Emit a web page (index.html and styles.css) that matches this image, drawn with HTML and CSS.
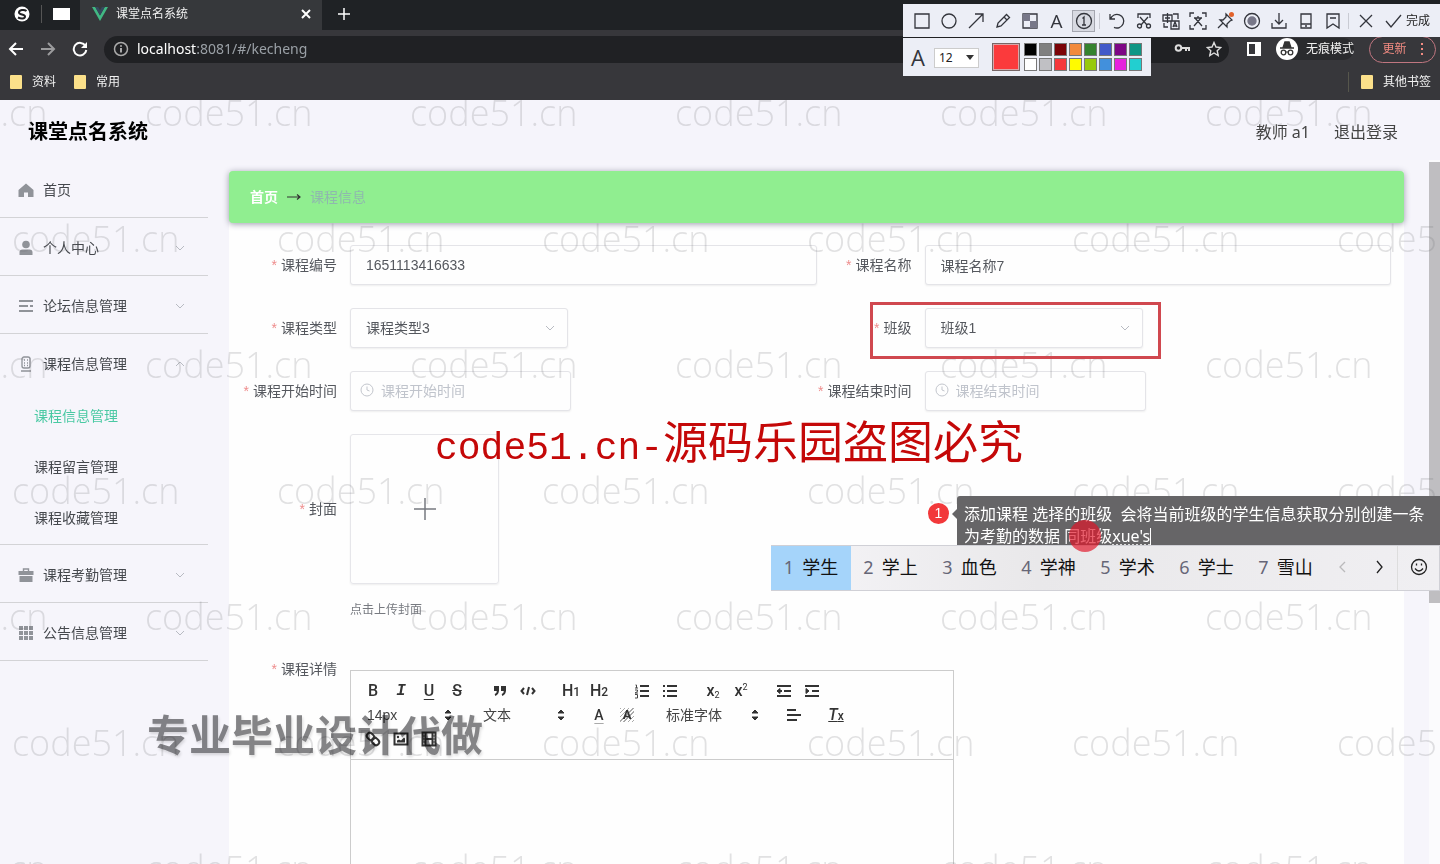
FILE: index.html
```html
<!DOCTYPE html>
<html lang="zh-CN">
<head>
<meta charset="utf-8">
<title>课堂点名系统</title>
<link rel="stylesheet" href="styles.css">
</head>
<body>
<div class="browser">
  <div class="tabstrip">
    <div class="pinned">
      <svg class="i16" viewBox="0 0 16 16"><circle cx="8" cy="8" r="7.500" fill="#fff"/><path d="M12.500 5C10 3 5 4 5 6.500S11 8 11 10.500 7 13 4 11.500" fill="none" stroke="#202124" stroke-width="2"/></svg>
      <span class="pin-line"></span>
      <span class="pin-page"></span>
    </div>
    <div class="tab">
      <svg class="i16" viewBox="0 0 16 16"><path d="M0 1h3.200L8 9.500 12.800 1H16L8 15z" fill="#41b883"/><path d="M3.200 1h2.900L8 4.300 9.900 1h2.900L8 9.500z" fill="#35495e"/></svg>
      <span class="tab-title">课堂点名系统</span>
      <button class="ghost" aria-label="关闭标签页"><svg class="i12" viewBox="0 0 12 12"><path d="M2 2l8 8M10 2l-8 8" class="w2"/></svg></button>
    </div>
    <button class="ghost new-tab" aria-label="新标签页"><svg class="i14" viewBox="0 0 14 14"><path d="M7 1v12M1 7h12" class="w1"/></svg></button>
  </div>
  <div class="addressrow">
    <button class="ghost" aria-label="后退"><svg class="i16" viewBox="0 0 16 16"><path d="M15 8H2M8 2L2 8l6 6" class="w2"/></svg></button>
    <button class="ghost dim" aria-label="前进"><svg class="i16" viewBox="0 0 16 16"><path d="M1 8h13M8 2l6 6-6 6" class="w2"/></svg></button>
    <button class="ghost" aria-label="刷新"><svg class="i16" viewBox="0 0 16 16"><path d="M13.500 5A6.300 6.300 0 1 0 14.300 9" class="w2"/><path d="M15 1v6H9z" fill="#fff"/></svg></button>
    <div class="omnibox">
      <svg class="i16" viewBox="0 0 16 16"><circle cx="8" cy="8" r="6.500" fill="none" stroke="#aaa" stroke-width="1.500"/><path d="M8 7v4.500M8 4.200v1.600" stroke="#ccc" stroke-width="1.600"/></svg>
      <span class="url"><b>localhost</b>:8081/#/kecheng</span>
      <svg class="i16 push" viewBox="0 0 16 16"><circle cx="4.500" cy="7" r="2.800" fill="none" stroke="#ddd" stroke-width="2"/><path d="M7 7h8v3M12 7v3" fill="none" stroke="#ddd" stroke-width="2"/></svg>
      <svg class="i16" viewBox="0 0 16 16"><path d="M8 1.500l2 4.500 4.800.5-3.600 3.200 1 4.800L8 12l-4.200 2.500 1-4.800L1.200 6.500 6 6z" fill="none" stroke="#ddd" stroke-width="1.400"/></svg>
    </div>
    <svg class="i14 panel-ic" viewBox="0 0 14 14"><path d="M1 1h12v12H1z" fill="none" stroke="#fff" stroke-width="2"/><path d="M8 1h5v12H8z" fill="#fff"/></svg>
    <div class="incognito">
      <svg class="i22" viewBox="0 0 22 22"><circle cx="11" cy="11" r="11" fill="#fff"/><path d="M4 10h14M7.500 8.500L9 4h4l1.500 4.500z" fill="#333" stroke="#333" stroke-width="1.500"/><circle cx="7.500" cy="14.500" r="2.300" fill="none" stroke="#333" stroke-width="1.300"/><circle cx="14.500" cy="14.500" r="2.300" fill="none" stroke="#333" stroke-width="1.300"/><path d="M9.500 14h3" stroke="#333"/></svg>
      <span>无痕模式</span>
    </div>
    <button class="update">更新<span class="dots"><i></i><i></i><i></i></span></button>
  </div>
  <div class="bookmarks">
    <a class="bm" href="#a"><i class="folder"></i>资料</a>
    <a class="bm" href="#b"><i class="folder"></i>常用</a>
    <a class="bm other" href="#c"><i class="folder"></i>其他书签</a>
  </div>
</div>

<div class="page">
  <header class="top">
    <h1>课堂点名系统</h1>
    <div class="user"><span>教师 a1</span><a href="#out">退出登录</a></div>
  </header>
  <div class="body">
    <nav class="side">
      <a class="item" href="#1"><svg class="i16" viewBox="0 0 16 16"><path d="M8 1.500L15.500 8v7H10v-4.500H6V15H.5V8z" fill="#909399"/></svg>首页</a>
      <a class="item" href="#2"><svg class="i16" viewBox="0 0 16 16"><circle cx="8" cy="4.500" r="3.800" fill="#909399"/><path d="M1.500 15v-2.500q0-3 3-3h7q3 0 3 3V15z" fill="#909399"/></svg>个人中心<svg class="chev" viewBox="0 0 10 10"><path d="M1 3l4 4 4-4"/></svg></a>
      <a class="item" href="#3"><svg class="i16" viewBox="0 0 16 16"><path d="M1 3h14M1 8h9M12 8h3M1 13h14" stroke="#909399" stroke-width="2"/></svg>论坛信息管理<svg class="chev" viewBox="0 0 10 10"><path d="M1 3l4 4 4-4"/></svg></a>
      <a class="item open" href="#4"><svg class="i16" viewBox="0 0 16 16"><rect x="4" y="1" width="8" height="11" rx="2" fill="none" stroke="#909399" stroke-width="1.300"/><path d="M3 15h10M6 4h1M9 4h1M6 7h1M9 7h1M6 9.500h1M9 9.500h1" stroke="#909399" stroke-width="1.300"/></svg>课程信息管理<svg class="chev" viewBox="0 0 10 10"><path d="M1 7l4-4 4 4"/></svg></a>
      <div class="sub">
        <a class="active" href="#5">课程信息管理</a>
        <a href="#6">课程留言管理</a>
        <a href="#7">课程收藏管理</a>
      </div>
      <a class="item" href="#8"><svg class="i16" viewBox="0 0 16 16"><path d="M5.500 4V2h5v2" fill="none" stroke="#909399" stroke-width="1.400"/><path d="M.5 4h15v4H.5zM1.500 9h13v6h-13z" fill="#909399"/></svg>课程考勤管理<svg class="chev" viewBox="0 0 10 10"><path d="M1 3l4 4 4-4"/></svg></a>
      <a class="item" href="#9"><svg class="i16" viewBox="0 0 16 16"><path d="M1 1h4v4H1zM6 1h4v4H6zM11 1h4v4h-4zM1 6h4v4H1zM6 6h4v4H6zM11 6h4v4h-4zM1 11h4v4H1zM6 11h4v4H6zM11 11h4v4h-4z" fill="#909399"/></svg>公告信息管理<svg class="chev" viewBox="0 0 10 10"><path d="M1 3l4 4 4-4"/></svg></a>
    </nav>
    <main class="main">
      <div class="crumb"><b>首页</b><svg class="i14" viewBox="0 0 14 14"><path d="M0 7h13M10 4.500L13 7l-3 2.500" fill="none" stroke="#333" stroke-width="1.200"/></svg><span>课程信息</span></div>
      <form class="form">
        <label class="req" for="no">课程编号</label>
        <div><input class="box" id="no" value="1651113416633"></div>
        <label class="req" for="nm">课程名称</label>
        <div><input class="box" id="nm" value="课程名称7"></div>

        <label class="req" for="ty">课程类型</label>
        <div><div class="pick"><select class="box" id="ty"><option>课程类型3</option></select><svg class="chev" viewBox="0 0 10 10"><path d="M1 3l4 4 4-4"/></svg></div></div>
        <label class="req" for="cl">班级</label>
        <div><div class="pick"><select class="box" id="cl"><option>班级1</option></select><svg class="chev" viewBox="0 0 10 10"><path d="M1 3l4 4 4-4"/></svg></div></div>

        <label class="req" for="st">课程开始时间</label>
        <div><div class="date"><input class="box" id="st" placeholder="课程开始时间"><svg class="clock" viewBox="0 0 14 14"><circle cx="7" cy="7" r="6"/><path d="M7 3.500V7l2.500 1"/></svg></div></div>
        <label class="req" for="en">课程结束时间</label>
        <div><div class="date"><input class="box" id="en" placeholder="课程结束时间"><svg class="clock" viewBox="0 0 14 14"><circle cx="7" cy="7" r="6"/><path d="M7 3.500V7l2.500 1"/></svg></div></div>

        <span class="req cover-label">封面</span>
        <div class="wide">
          <button type="button" class="upload" aria-label="上传封面"><svg viewBox="0 0 24 24"><path d="M12 1v22M1 12h22" fill="none" stroke="#777a80" stroke-width="1.500"/></svg></button>
          <p class="hint">点击上传封面</p>
        </div>

        <span class="req detail-label">课程详情</span>
        <div class="wide detail">
          <div class="editor">
            <div class="tools">
              <div class="trow">
                <div class="tg"><button type="button" class="tb bold">B</button><button type="button" class="tb ital">I</button><button type="button" class="tb und">U</button><button type="button" class="tb strike">S</button></div>
                <div class="tg"><button type="button" class="tb" aria-label="引用"><svg viewBox="0 0 18 18"><path d="M4 5h3v3H4zM11 5h3v3h-3z" class="f s"/><path d="M7 8c0 4-3 5-3 5M14 8c0 4-3 5-3 5" class="s"/></svg></button><button type="button" class="tb" aria-label="代码"><svg viewBox="0 0 18 18"><path d="M5 6L2.500 9 5 12M13 6l2.500 3L13 12M10 5L8 13" class="s"/></svg></button></div>
                <div class="tg"><button type="button" class="tb">H<small>1</small></button><button type="button" class="tb">H<small>2</small></button></div>
                <div class="tg"><button type="button" class="tb" aria-label="有序列表"><svg viewBox="0 0 18 18"><path d="M7 4h9M7 9h9M7 14h9" class="s"/><path d="M2.500 3h1v3M2 6h3M2 8h2.500v1.500L2 11h3M2 12.500h2.500V16H2" fill="none" stroke="#444"/></svg></button><button type="button" class="tb" aria-label="无序列表"><svg viewBox="0 0 18 18"><path d="M6 4h10M6 9h10M6 14h10M2 4h2M2 9h2M2 14h2" class="s"/></svg></button></div>
                <div class="tg"><button type="button" class="tb">x<sub>2</sub></button><button type="button" class="tb">x<sup>2</sup></button></div>
                <div class="tg"><button type="button" class="tb" aria-label="减少缩进"><svg viewBox="0 0 18 18"><path d="M2 4h14M2 14h14M9 9h7M2 9h5" class="s"/><path d="M5 6.500v5L2 9z" class="f s1"/></svg></button><button type="button" class="tb" aria-label="增加缩进"><svg viewBox="0 0 18 18"><path d="M2 4h14M2 14h14M9 9h7" class="s"/><path d="M3 6.500v5L6 9z" class="f s1"/></svg></button></div>
              </div>
              <div class="trow">
                <button type="button" class="qp">14px<svg viewBox="0 0 18 18"><path d="M6 7l3-3 3 3zM6 11l3 3 3-3z" class="f s1"/></svg></button>
                <button type="button" class="qp head">文本<svg viewBox="0 0 18 18"><path d="M6 7l3-3 3 3zM6 11l3 3 3-3z" class="f s1"/></svg></button>
                <div class="tg"><button type="button" class="tb color">A</button><button type="button" class="tb fill"><span>A</span></button></div>
                <button type="button" class="qp font">标准字体<svg viewBox="0 0 18 18"><path d="M6 7l3-3 3 3zM6 11l3 3 3-3z" class="f s1"/></svg></button>
                <button type="button" class="tb" aria-label="对齐"><svg viewBox="0 0 18 18"><path d="M3 4h9M3 9h14M3 14h10" class="s"/></svg></button>
                <button type="button" class="tb clean"><i>T</i><small>x</small></button>
              </div>
              <div class="trow">
                <div class="tg"><button type="button" class="tb" aria-label="链接"><svg viewBox="0 0 18 18"><g class="s" transform="rotate(45 9 9)"><rect x="1.500" y="6" width="8" height="6" rx="3"/><rect x="8.500" y="6" width="8" height="6" rx="3"/></g></svg></button><button type="button" class="tb" aria-label="图片"><svg viewBox="0 0 18 18"><path d="M2.500 3.500h13v11h-13z" class="s"/><circle cx="6" cy="7" r="1.200" class="f"/><path d="M5 12.500v-2l2-1 2 1 3-3 1 1v4z" class="f"/></svg></button><button type="button" class="tb" aria-label="视频"><svg viewBox="0 0 18 18"><path d="M2.500 2.500h13v13h-13zM5.500 3v12M12.500 3v12M5 9h8" class="s"/><path d="M3 6h2M3 9h2M3 12h2M13 6h2M13 9h2M13 12h2" class="s1"/></svg></button></div>
              </div>
            </div>
            <div class="canvas" contenteditable="true" role="textbox" aria-label="课程详情"></div>
          </div>
        </div>
      </form>
    </main>
    <div class="rail"><div class="thumb"></div></div>
  </div>
  <div class="marks" aria-hidden="true">
    <div class="mrow"><span>code51.cn</span><span>code51.cn</span><span>code51.cn</span><span>code51.cn</span><span>code51.cn</span><span>code51.cn</span></div>
    <div class="mrow odd"><span>code51.cn</span><span>code51.cn</span><span>code51.cn</span><span>code51.cn</span><span>code51.cn</span><span>code51.cn</span></div>
    <div class="mrow"><span>code51.cn</span><span>code51.cn</span><span>code51.cn</span><span>code51.cn</span><span>code51.cn</span><span>code51.cn</span></div>
    <div class="mrow odd"><span>code51.cn</span><span>code51.cn</span><span>code51.cn</span><span>code51.cn</span><span>code51.cn</span><span>code51.cn</span></div>
    <div class="mrow"><span>code51.cn</span><span>code51.cn</span><span>code51.cn</span><span>code51.cn</span><span>code51.cn</span><span>code51.cn</span></div>
    <div class="mrow odd"><span>code51.cn</span><span>code51.cn</span><span>code51.cn</span><span>code51.cn</span><span>code51.cn</span><span>code51.cn</span></div>
    <div class="mrow"><span>code51.cn</span><span>code51.cn</span><span>code51.cn</span><span>code51.cn</span><span>code51.cn</span><span>code51.cn</span></div>
  </div>
</div>

<div class="frame"></div>
<div class="notice"><span>code51.cn-</span>源码乐园盗图必究</div>
<div class="ad">专业毕业设计代做</div>

<div class="badge">1</div>
<div class="note">添加课程 选择的班级  会将当前班级的学生信息获取分别创建一条
为考勤的数据 同班级<u>xue's</u><span class="caret"></span></div>

<div class="ime">
  <button class="cand on"><span>1</span>学生</button>
  <button class="cand"><span>2</span>学上</button>
  <button class="cand"><span>3</span>血色</button>
  <button class="cand"><span>4</span>学神</button>
  <button class="cand"><span>5</span>学术</button>
  <button class="cand"><span>6</span>学士</button>
  <button class="cand"><span>7</span>雪山</button>
  <button class="nav off" aria-label="上一页"><svg class="i14" viewBox="0 0 14 14"><path d="M9 2L4 7l5 5" class="k"/></svg></button>
  <button class="nav" aria-label="下一页"><svg class="i14" viewBox="0 0 14 14"><path d="M5 1l5 6-5 6" class="k"/></svg></button>
  <button class="nav face" aria-label="表情"><svg class="i18" viewBox="0 0 18 18"><circle cx="9" cy="9" r="7.500" class="k"/><path d="M5 10.500q4 5 8 0M6.500 5.500v2M11.500 5.500v2" class="k"/></svg></button>
</div>
<div class="cursor"></div>

<div class="snip">
  <button aria-label="矩形"><svg viewBox="0 0 18 18"><path d="M2 2h14v14H2z"/></svg></button>
  <button aria-label="椭圆"><svg viewBox="0 0 18 18"><circle cx="9" cy="9" r="7"/></svg></button>
  <button aria-label="箭头"><svg viewBox="0 0 18 18"><path d="M2 16L16 2M8 2h8v8"/></svg></button>
  <button aria-label="画笔"><svg viewBox="0 0 18 18"><path d="M3 15l1-4 8.500-8.500 3 3L7 14zM10 5l3 3"/></svg></button>
  <button aria-label="马赛克"><svg viewBox="0 0 18 18"><path d="M2 2h14v14H2z"/><path d="M9 9h7v7H9zM2 2h7v7H2z" fill="#778" stroke="none"/></svg></button>
  <button class="letter">A</button>
  <button class="sel" aria-label="序号"><svg viewBox="0 0 18 18"><circle cx="9" cy="9" r="7.500"/><path d="M7.500 6.500L9 5v8M7 13h4"/></svg></button>
  <i class="sep"></i>
  <button aria-label="撤销"><svg viewBox="0 0 18 18"><path d="M2 2v5h5M2.500 7A6.800 6.800 0 1 1 6 15.300"/></svg></button>
  <button aria-label="裁剪"><svg viewBox="0 0 18 18"><path d="M3 6V2h12v4M5 5l7 8M13 5l-7 8"/><circle cx="4.500" cy="14" r="2"/><circle cx="13.500" cy="14" r="2"/></svg></button>
  <button aria-label="翻译"><svg viewBox="0 0 18 18"><path d="M1 3h9v6H1zM3 6h5M5.500 1v10M11 2h5v5M2 11v4h4M9 9h8v8H9zM11 15l2-5 2 5M11.500 14h3"/></svg></button>
  <button aria-label="识别文字"><svg viewBox="0 0 18 18"><path d="M1 5V1h4M13 1h4v4M17 13v4h-4M5 17H1v-4M5 6h8M9 4v2M12 6L5 14M6 6l7 8"/></svg></button>
  <button class="pin" aria-label="钉住"><svg viewBox="0 0 18 18"><path d="M10 2l6 6-2 1-3 3v3L4 8h3l3-3zM7 11l-5 5"/><circle cx="15.500" cy="2.500" r="2.500" fill="#e2622b" stroke="none"/></svg></button>
  <button aria-label="录制"><svg viewBox="0 0 18 18"><circle cx="9" cy="9" r="7.500"/><circle cx="9" cy="9" r="4" fill="#778" stroke="#778"/></svg></button>
  <button aria-label="保存"><svg viewBox="0 0 18 18"><path d="M9 1v11M5 8l4 4 4-4M2 11v5h14v-5"/></svg></button>
  <button aria-label="手机"><svg viewBox="0 0 18 18"><path d="M4 2h10v14H4zM4 12h10M8 14h2"/></svg></button>
  <button aria-label="收藏"><svg viewBox="0 0 18 18"><path d="M3 2h12v14l-6-4-6 4zM6 6h6"/></svg></button>
  <i class="sep"></i>
  <button aria-label="取消"><svg viewBox="0 0 18 18"><path d="M3 3l12 12M15 3L3 15"/></svg></button>
  <button class="done"><svg viewBox="0 0 18 18"><path d="M2 9l5 6L17 3"/></svg>完成</button>
</div>
<div class="palette">
  <span class="letter">A</span>
  <div class="size"><select aria-label="字号"><option>12</option></select><i></i></div>
  <span class="current"></span>
  <div class="colors"><i class="c1"></i><i class="c2"></i><i class="c3"></i><i class="c4"></i><i class="c5"></i><i class="c6"></i><i class="c7"></i><i class="c8"></i><i class="c9"></i><i class="c10"></i><i class="c11"></i><i class="c12"></i><i class="c13"></i><i class="c14"></i><i class="c15"></i><i class="c16"></i></div>
</div>
</body>
</html>
```
FILE: styles.css
```css
* { box-sizing: border-box; }
body {
  margin: 0;
  height: 100vh;
  display: flex;
  flex-direction: column;
  overflow: hidden;
  position: relative;
  font: 14px/20px "Liberation Sans", "Noto Sans CJK SC", sans-serif;
  color: #55585e;
}
button, input, select { font: inherit; color: inherit; }
button { border: 0; background: none; padding: 0; display: flex; align-items: center; justify-content: center; }
a { color: inherit; text-decoration: none; }
svg { flex: none; display: block; }
.i12 { width: 12px; height: 12px; }
.i14 { width: 14px; height: 14px; }
.i16 { width: 16px; height: 16px; }
.i18 { width: 18px; height: 18px; }
.i22 { width: 22px; height: 22px; }
.w1, .w2 { fill: none; stroke: #fff; stroke-width: 1.5; }
.w2 { stroke-width: 2; }

/* browser window */
.browser { flex: none; background: #37373b; color: #f1f1f1; }
.tabstrip { height: 30px; background: #1f2225; display: flex; align-items: stretch; }
.pinned { width: 80px; display: flex; align-items: center; padding: 0 10px 3px 14px; justify-content: space-between; }
.pin-line { width: 1px; height: 18px; background: #555; }
.pin-page { width: 17px; height: 12px; background: #fff; }
.tab { width: 242px; background: #36383b; display: flex; align-items: center; gap: 8px; padding: 0 10px 3px 12px; }
.tab-title { flex: 1; font-size: 12px; }
.new-tab { width: 44px; padding-bottom: 3px; }
.addressrow { height: 38px; display: flex; align-items: center; padding: 0 4px 0 8px; }
.addressrow .ghost { margin-right: 16px; }
.addressrow .dim { opacity: .5; }
.omnibox { flex: 1; height: 27px; border-radius: 14px; background: #202124; display: flex; align-items: center; gap: 8px; padding: 0 7px 0 9px; }
.push { margin-left: auto; margin-right: 8px; }
.url { font: 14px/20px "Noto Sans", sans-serif; color: #9aa0a6; }
.url b { font-weight: 400; color: #fff; }
.panel-ic { margin: 0 15px 0 18px; }
.incognito { display: flex; align-items: center; gap: 8px; font-size: 12px; background: #2a2b2e; border-radius: 14px; }
.update { margin-left: 15px; width: 67px; height: 27px; border: 1px solid #c07680; border-radius: 14px; color: #f28b82; font-size: 12px; gap: 14px; }
.dots { display: flex; flex-direction: column; gap: 3px; }
.dots i { width: 2px; height: 2px; background: #f28b82; }
.bookmarks { height: 32px; display: flex; align-items: center; gap: 18px; padding: 0 9px 4px 10px; font-size: 12px; }
.bm { display: flex; align-items: center; gap: 10px; }
.folder { width: 12px; height: 14px; background: #fbe08a; border-radius: 1px; }
.other { margin-left: auto; padding-left: 12px; border-left: 1px solid #56564c; }

/* application */
.page { flex: 1; min-height: 0; position: relative; overflow: hidden; background: #f6f5fb; display: flex; flex-direction: column; }
.top { height: 60px; flex: none; display: flex; align-items: center; justify-content: space-between; padding: 4px 42px 0 28px; background: #f5f4fb; }
h1 { margin: 0; font-size: 20px; line-height: 28px; color: #000; }
.user { display: flex; gap: 24px; font: 16px/24px "Noto Sans", "Noto Sans CJK SC", sans-serif; color: #444; }
.body { flex: 1; min-height: 0; display: flex; }
.side { width: 208px; flex: none; color: #45484d; }
.item { height: 58px; border-bottom: 1px solid #d3d3d6; display: flex; align-items: center; gap: 9px; padding: 2px 23px 0 18px; }
.item .chev { margin-left: auto; }
.open { border-bottom: 0; }
.chev { width: 10px; height: 10px; fill: none; stroke: #b8bbc2; }
.sub { border-bottom: 1px solid #d3d3d6; padding-left: 34px; display: flex; flex-direction: column; margin-top: -1px; }
.sub a { line-height: 51px; }
.sub .active { color: #4ac9a3; }
.main { flex: 1; min-width: 0; margin: 11px 25px 0 21px; background: #fefefe; display: flex; flex-direction: column; }
.crumb { flex: none; height: 52px; border-radius: 4px; background: #90ee90; box-shadow: 0 1px 6px #99a; display: flex; align-items: center; gap: 9px; padding: 0 21px; }
.crumb b { color: #fff; }
.crumb span { color: #8fb8ae; }
.form { display: grid; grid-template-columns: 121px 1fr 108px 1fr; row-gap: 23px; padding: 22px 13px 0 0; }
.form > label, .form > span { line-height: 40px; text-align: right; padding-right: 13px; white-space: nowrap; }
.req::before { content: "*"; color: #ee8c8c; margin-right: 4px; }
.box { display: block; width: 100%; height: 40px; border: 1px solid #e4e4e8; border-radius: 3px; background: #fefefe; padding: 0 15px; appearance: none; outline: 0; box-shadow: 0 1px 2px #eee; }
.pick { position: relative; width: 218px; }
.pick .chev { position: absolute; right: 13px; top: 15px; }
.date { position: relative; width: 221px; }
.date .box { padding-left: 30px; }
.date .box::placeholder { color: #c0c4cc; }
.clock { position: absolute; left: 10px; top: 12px; width: 14px; height: 14px; fill: none; stroke: #c3c6cd; }
.wide { grid-column: 2 / 5; }
.form > .cover-label { padding-top: 55px; }
.upload { width: 149px; height: 150px; border: 1px solid #e6e6ea; border-radius: 3px; box-shadow: 0 1px 2px #eee; }
.upload svg { width: 24px; height: 24px; }
.hint { margin: 16px 0 0; font-size: 12px; color: #777a80; }
.form > .detail-label { padding-top: 6px; }
.detail { padding-top: 27px; }
.editor { width: 604px; border: 1px solid #ccc; }
.tools { padding: 8px; border-bottom: 1px solid #ccc; color: #444; }
.trow { display: flex; height: 24px; gap: 15px; }
.tg { display: flex; }
.tb { width: 28px; height: 24px; font: 500 16px/24px Roboto, sans-serif; color: #333; }
.tb svg, .qp svg { width: 18px; height: 18px; }
.tb small { font-size: 12px; padding-top: 2px; }
.tb sub, .tb sup { font-size: 9px; line-height: 9px; font-weight: 400; }
.tb sub { padding-top: 8px; }
.tb sup { padding-bottom: 8px; }
.ital { font: italic bold 16px/24px "Liberation Mono", monospace; }
.und { text-decoration: underline; text-underline-offset: 3px; }
.strike { text-decoration: line-through; }
.color { text-decoration: underline; text-decoration-color: #aaa; text-underline-offset: 3px; font-size: 14px; }
.fill span { font-size: 13px; font-weight: 700; line-height: 14px; padding: 0 3px; background: repeating-linear-gradient(135deg, #aaa 0 1px, #fff 1px 3px); }
.clean { text-decoration: underline; }
.s { fill: none; stroke: #333; stroke-width: 2; }
.s1 { fill: none; stroke: #333; stroke-width: 1; }
.f { fill: #333; }
.qp { width: 98px; justify-content: space-between; padding-left: 8px; }
.qp.head { padding-left: 11px; }
.qp.font { width: 108px; padding-left: 10px; }
.canvas { height: 240px; outline: 0; }
.rail { width: 11px; flex: none; padding-top: 2px; background: #fbfbfd; }
.thumb { height: 441px; background: #bfbec1; }

/* repeating page mark */
.marks { position: absolute; left: 0; right: 0; top: -5px; overflow: hidden; pointer-events: none; }
.mrow { display: flex; height: 126px; margin-left: -120px; font: 300 36px/36px "Open Sans", "Noto Sans", sans-serif; color: rgba(110, 108, 115, .2); }
.mrow.odd { margin-left: 12px; }
.mrow span { flex: none; width: 265px; }

/* annotations over the page */
.frame { position: absolute; left: 870px; top: 302px; width: 291px; height: 57px; border: 3px solid #d0484f; }
.notice { position: absolute; left: 435px; top: 410px; font: 45px/60px "Noto Sans CJK SC", sans-serif; color: #c40808; white-space: nowrap; }
.notice span { font: 38px/60px "Liberation Mono", monospace; }
.ad { position: absolute; left: 147px; top: 708px; font: 700 42px/50px "Noto Sans CJK SC", sans-serif; color: #858587; text-shadow: 1px 2px 3px #ddd; white-space: nowrap; mix-blend-mode: multiply; }
.badge { position: absolute; left: 928px; top: 503px; width: 21px; height: 21px; border-radius: 50%; background: #f2383a; color: #fff; text-align: center; line-height: 21px; }
.note { position: absolute; left: 957px; right: 0; top: 496px; height: 50px; padding: 7px 7px 0; font: 16px/22px "Noto Sans", "Noto Sans CJK SC", sans-serif; color: #fff; background: #666567; white-space: pre; border-radius: 3px 0 0 0; }
.note::before { content: ""; position: absolute; left: -5px; top: 13px; border: 5px solid transparent; border-left: 0; border-right-color: #666567; }
.note u { text-decoration-style: dotted; text-underline-offset: 3px; }
.caret { display: inline-block; width: 1px; height: 18px; background: #fff; vertical-align: -4px; }
.cursor { position: absolute; left: 1069px; top: 520px; width: 32px; height: 32px; border-radius: 50%; background: rgba(226, 20, 40, .68); }
.ime { position: absolute; left: 771px; right: 0; top: 545px; height: 46px; display: flex; background: linear-gradient(90deg, #f6f5f8, #e9e8ea 40%, #f0eff2); border: 1px solid #d0d0d6; border-left: 0; font: 18px/24px "Noto Sans", "Noto Sans CJK SC", sans-serif; color: #111; }
.ime button { padding-bottom: 2px; }
.cand { flex: 0 0 80px; gap: 8px; }
.cand + .cand { flex-basis: 79px; }
.cand span { color: #667; }
.cand.on { background: #a5d4fa; }
.nav { flex: 0 0 36px; }
.off { opacity: .25; }
.face { flex: 1; border-left: 1px solid #ddd; }
.k { fill: none; stroke: #222; stroke-width: 1.3; }

/* capture toolbar */
.snip { position: absolute; left: 903px; right: 0; top: 4px; height: 33px; display: flex; align-items: center; padding-left: 5px; background: #eceef6; color: #222; font-size: 12px; }
.snip button { width: 27px; height: 24px; flex: none; }
.snip svg { width: 18px; height: 18px; fill: none; stroke: #33353c; stroke-width: 1.3; }
.snip .sel { background: #d8dae2; border: 1px solid #a5a7b0; width: 23px; height: 22px; margin: 0 2px; }
.snip .done { width: auto; gap: 4px; padding-left: 5px; }
.sep { width: 1px; height: 16px; margin: 0 3px 0 2px; background: #c9cbd3; }
.letter { font: 19px/24px "Open Sans", sans-serif; color: #33353c; }
.palette { position: absolute; left: 903px; top: 38px; height: 38px; width: 248px; display: flex; align-items: center; padding: 0 8px; background: #eceef6; color: #222; }
.palette .letter { width: 23px; font-size: 22px; }
.size { position: relative; width: 45px; }
.size select { width: 100%; height: 20px; border: 1px solid #ccc; background: #fff; appearance: none; padding: 0 4px; font: 12px/16px "Noto Sans", sans-serif; border-radius: 0; }
.size i { position: absolute; right: 5px; top: 8px; border: 4px solid transparent; border-top: 5px solid #333; border-bottom: 0; }
.current { width: 28px; height: 28px; margin: 0 4px 0 13px; background: #fb3a3c; border: 2px solid #d9a5a8; outline: 1px solid #766; outline-offset: -1px; }
.colors { display: grid; grid-template-columns: repeat(8, 13px); gap: 2px; }
.colors i { height: 13px; border: 1px solid #777; }
.c1 { background: #000; } .c2 { background: #808080; } .c3 { background: #7b0308; } .c4 { background: #f28a3c; }
.c5 { background: #35822f; } .c6 { background: #4259c9; } .c7 { background: #7d0785; } .c8 { background: #0f9685; }
.c9 { background: #fff; } .c10 { background: #c0c0c4; } .c11 { background: #f6383c; } .c12 { background: #fffb00; }
.c13 { background: #98c90c; } .c14 { background: #4290dc; } .c15 { background: #e622dd; } .c16 { background: #22cfd0; }
```
